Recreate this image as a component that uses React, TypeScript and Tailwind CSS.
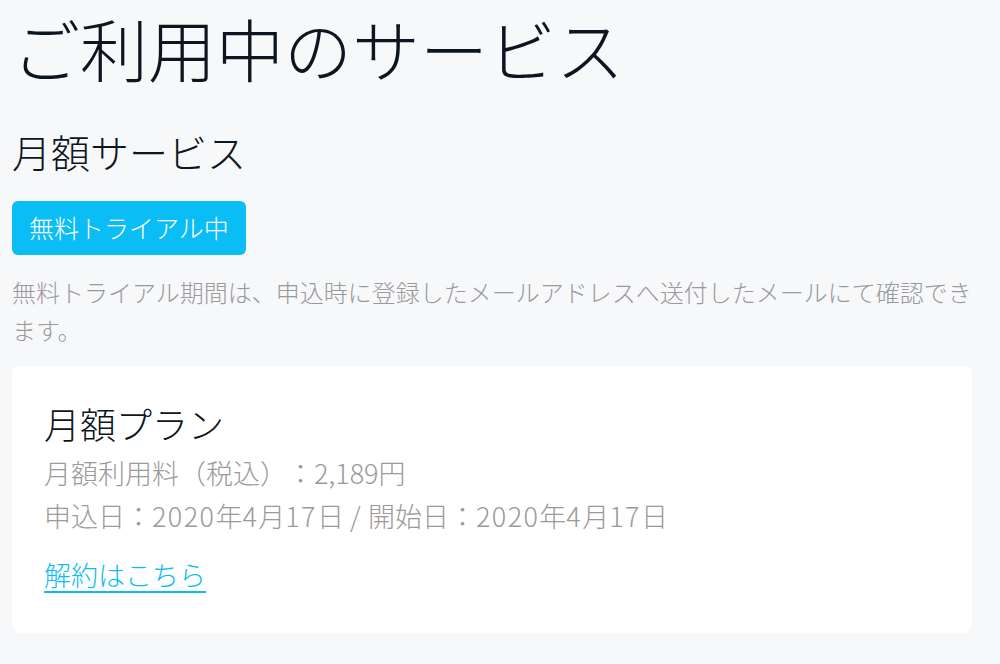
import React from "react";

export default function App() {
  const D = ({ children }: { children: React.ReactNode }) => (
    <span className="tracking-[1.4px]">{children}</span>
  );
  return (
    <div
      className="min-h-[664px] w-full bg-[#f7f8fa] pl-[12px] pr-[28px] pt-[1px] [text-spacing-trim:space-all]"
      style={{ fontFamily: '"Noto Sans CJK JP", "Noto Sans", sans-serif' }}
    >
      <h1 className="mt-[6px] text-[68px] leading-[82px] font-light text-[#0d1520]">
        ご利用中のサービス
      </h1>
      <h2 className="mt-[38px] text-[39px] leading-[48px] font-light text-[#0d1520]">
        月額サービス
      </h2>
      <div className="mt-[26px] inline-flex h-[54px] items-center rounded-[6px] bg-[#0bbdf5] px-[17px] text-[25px] font-light text-white">
        無料トライアル中
      </div>
      <p className="mt-[18px] text-[24px] leading-[38px] font-light text-[#9a9a9a]">
        無料トライアル期間は、申込時に登録したメールアドレスへ送付したメールにて確認できます。
      </p>
      <div className="mt-[17px] rounded-[8px] bg-white px-[32px] pt-[35px] pb-[36px]">
        <h3 className="text-[36px] leading-[44px] font-light text-[#0d1520]">月額プラン</h3>
        <div className="mt-[6px] text-[27px] leading-[43px] font-light text-[#9a9a9a]">
          月額利用料（税込）：2,189円
        </div>
        <div className="text-[27px] leading-[43px] font-light text-[#9a9a9a]">
          申込日：<D>2020</D>年<D>4</D>月<D>17</D>日 <D>/</D> 開始日：<D>2020</D>年<D>4</D>月<D>17</D>日
        </div>
        <a
          href="#"
          className="mt-[16px] inline-block text-[27px] leading-[44px] font-light text-[#0bbdf5] underline underline-offset-[5px]"
        >
          解約はこちら
        </a>
      </div>
    </div>
  );
}
